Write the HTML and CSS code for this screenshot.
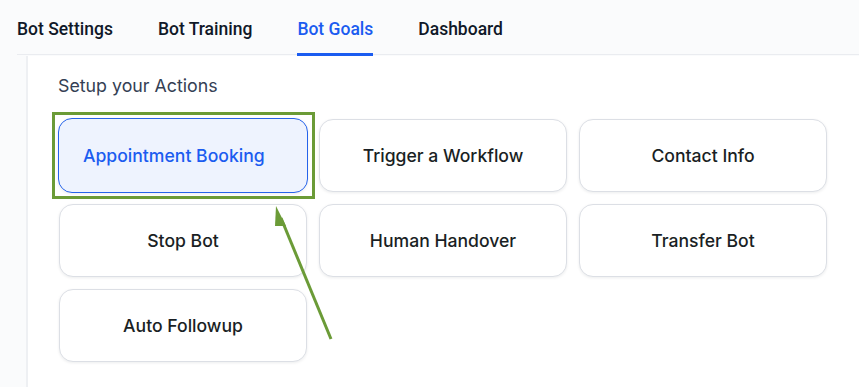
FILE: index.html
```html
<!DOCTYPE html>
<html>
<head>
<meta charset="utf-8">
<link rel="stylesheet" href="styles.css">
</head>
<body>
<div class="page">
  <nav class="tabs">
    <div class="tab">Bot Settings</div>
    <div class="tab">Bot Training</div>
    <div class="tab active">Bot Goals</div>
    <div class="tab">Dashboard</div>
  </nav>
  <div class="body">
    <div class="rail"></div>
    <main class="main">
      <h2 class="title">Setup your Actions</h2>
      <div class="grid">
        <div class="card selected">Appointment Booking</div>
        <div class="card">Trigger a Workflow</div>
        <div class="card">Contact Info</div>
        <div class="card">Stop Bot</div>
        <div class="card">Human Handover</div>
        <div class="card">Transfer Bot</div>
        <div class="card">Auto Followup</div>
      </div>
    </main>
  </div>
  <div class="highlight"></div>
  <svg class="arrow" width="859" height="387" viewBox="0 0 859 387">
    <line x1="331" y1="339" x2="281" y2="218" stroke="#6b9b37" stroke-width="3"/>
    <polygon points="276,206 286,226 275,226" fill="#6b9b37"/>
  </svg>
</div>
</body>
</html>
```
FILE: styles.css
```css
* { box-sizing: border-box; }
html, body { margin: 0; padding: 0; }
body {
  width: 859px;
  height: 387px;
  overflow: hidden;
  background: #fff;
  font-family: Inter, "Noto Sans", sans-serif;
}
.page { position: relative; width: 859px; height: 387px; display: flex; flex-direction: column; }
.tabs {
  position: relative;
  display: flex;
  gap: 45px;
  height: 56px;
  padding-left: 17px;
  background: #fafbfc;
}
.tabs::before {
  content: "";
  position: absolute;
  left: 17px; right: 0; bottom: 1px;
  height: 1px;
  background: #eaecf0;
}
.tab {
  position: relative;
  font-family: Roboto, "Liberation Sans", sans-serif;
  font-weight: 500;
  font-size: 17.5px;
  color: #101828;
  padding-top: 19px;
  height: 56px;
}
.tab.active { color: #1b5cf0; }
.tab.active::after {
  content: "";
  position: absolute;
  left: 0; right: 0; bottom: 0;
  height: 3px;
  background: #1b5cf0;
}
.body { flex: 1; display: flex; }
.rail {
  width: 28px;
  background: #fafbfc;
  border-right: 2px solid #eef0f3;
}
.main { flex: 1; padding: 19px 0 0 30px; background: #fff; }
.title {
  margin: 0 0 22px;
  font-size: 17.8px;
  font-weight: 400;
  color: #344054;
  line-height: 22px;
}
.grid {
  display: grid;
  grid-template-columns: repeat(3, 248px);
  grid-auto-rows: 73px;
  gap: 12px 12px;
  margin-left: 1px;
}
.card {
  border: 1px solid #dcdfe5;
  border-radius: 14px;
  background: #fff;
  box-shadow: 0 1px 3px rgba(16, 24, 40, 0.08);
  display: flex;
  align-items: center;
  justify-content: center;
  font-size: 17.6px;
  font-weight: 450;
  color: #1a1f24;
}
.card.selected {
  margin: -1px -1px -1px -1px;
  justify-content: flex-start;
  padding-left: 24px;
  background: #eef3fe;
  border-color: #2563eb;
  color: #1b5cf0;
}
.highlight {
  position: absolute;
  left: 52px; top: 112px;
  width: 263px; height: 87px;
  border: 3px solid #6b9b37;
}
.arrow { position: absolute; left: 0; top: 0; pointer-events: none; }
```
